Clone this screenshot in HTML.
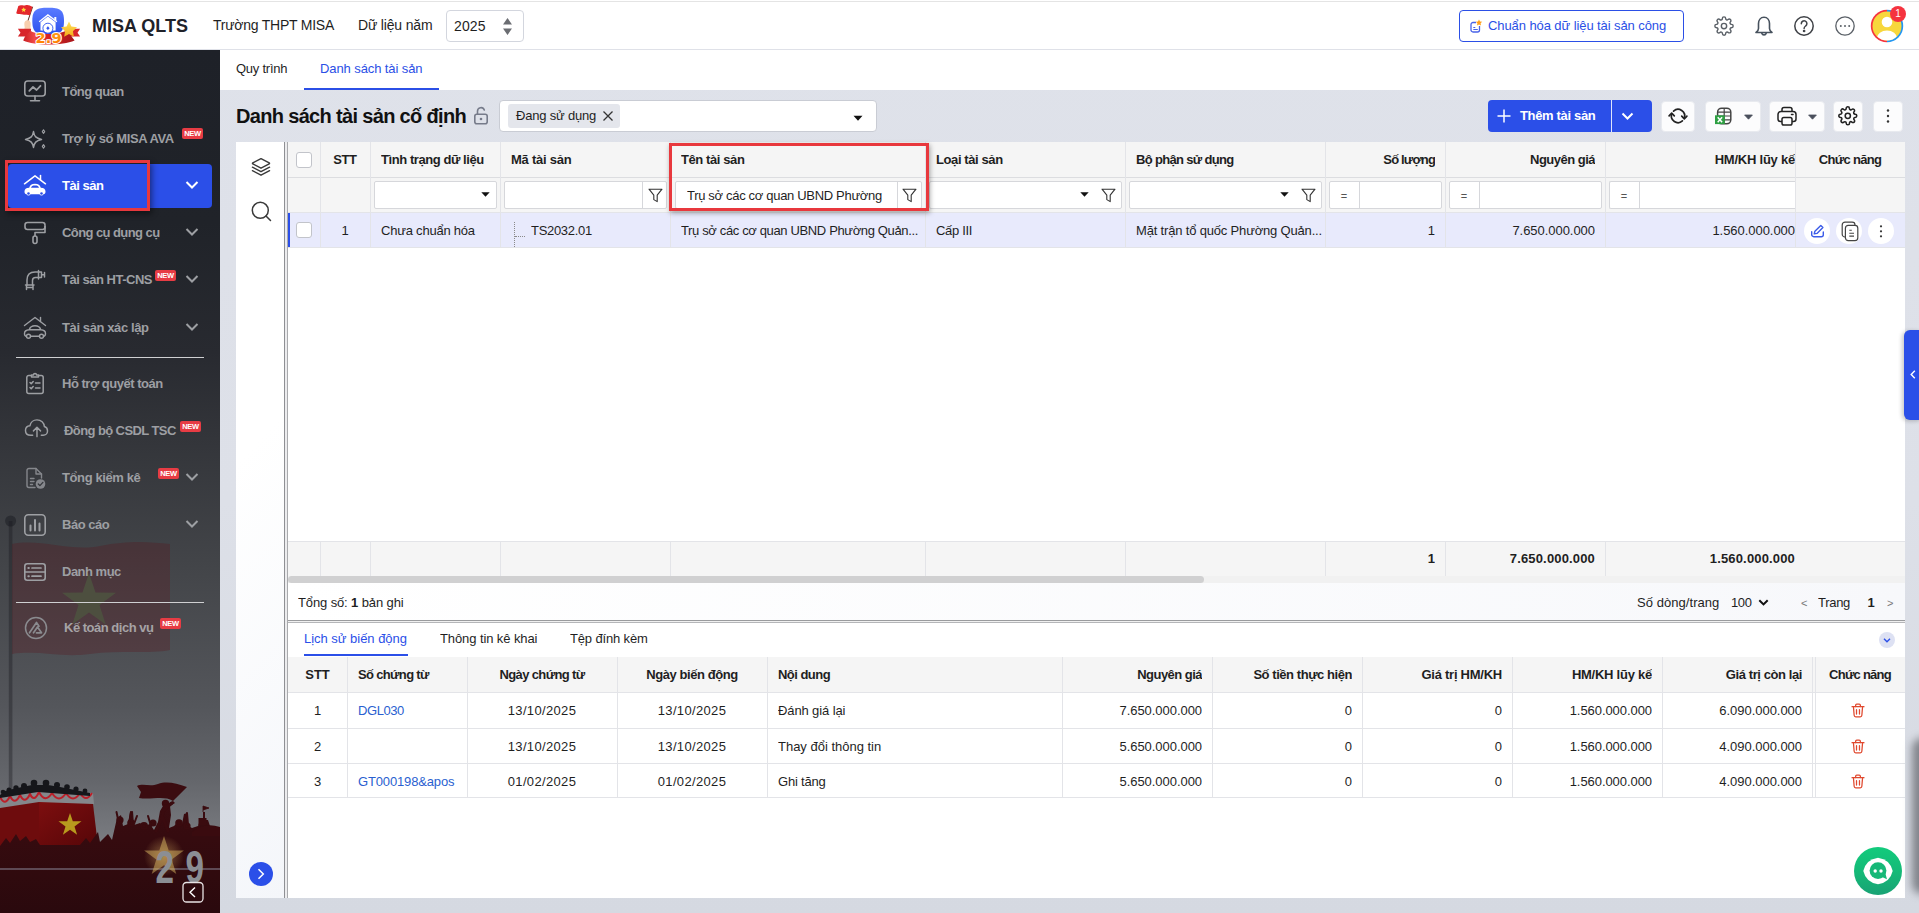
<!DOCTYPE html>
<html lang="vi">
<head>
<meta charset="utf-8">
<title>MISA QLTS - Danh sách tài sản</title>
<style>
*{box-sizing:border-box;margin:0;padding:0}
html,body{width:1919px;height:913px;overflow:hidden}
body{font-family:"Liberation Sans",sans-serif;font-size:13px;color:#1f1f1f;background:linear-gradient(180deg,#dfe2ea 0%,#dde0e8 55%,#d5d9e1 100%);position:relative}
.abs{position:absolute}
svg{display:block;overflow:visible}
/* ---------- header ---------- */
#hdr{position:absolute;left:0;top:0;width:1919px;height:50px;background:#fff;border-top:2px solid transparent;background-image:linear-gradient(#e4e4e4,#e4e4e4);background-size:100% 1px;background-position:0 1px;background-repeat:no-repeat;background-origin:border-box;border-bottom:1px solid #dfe1e8}
#hdr .t{position:absolute;white-space:nowrap}
/* ---------- sidebar ---------- */
#side{position:absolute;left:0;top:50px;width:220px;height:863px;overflow:hidden;
background:linear-gradient(180deg,#1e2128 0%,#202329 20%,#282a30 35%,#33353a 45%,#434549 60%,#54565b 76%,#64666b 84.600%,#797b80 91.500%,#797b80 100%)}
.mi{position:absolute;left:0;width:220px;height:46px;color:#9d9fa3;font-weight:bold;font-size:13px;white-space:nowrap}
.mi .lb{position:absolute;left:62px;top:50%;transform:translateY(-50%)}
.mi .ic{position:absolute;left:23.200px;top:calc(50% + 0.6px);transform:translateY(-50%)}
.mi .ch{position:absolute;left:184.600px;top:50%;transform:translateY(-50%)}
.new{position:absolute;background:#e73c44;color:#fff;font-size:7.5px;font-weight:bold;border-radius:2px;height:11px;line-height:11px;padding:0 2.2px;letter-spacing:-0.25px}
.sep{position:absolute;left:16px;width:188px;height:1px;background:#cfd0d2}
/* ---------- main ---------- */
#tabs{position:absolute;left:220px;top:50px;width:1699px;height:40px;background:#fff}
#tabs .t{position:absolute;top:0;line-height:38px;font-size:13px;white-space:nowrap}
.btn{position:absolute;background:#fcfcfd;border:1px solid #e8eaef;border-radius:4px;height:31px;top:100.500px}
/* ---------- grid ---------- */
.cell{position:absolute;white-space:nowrap;overflow:hidden;font-size:13px}
.hc{font-weight:bold;color:#1f1f1f}
.vl{position:absolute;width:1px;background:#e3e4e8}
.hl{position:absolute;height:1px;background:#e3e4e8}
.fbox{position:absolute;top:181px;height:28px;background:#fff;border:1px solid #d6d7db;border-radius:2px}
.cb{position:absolute;width:16px;height:16px;border:1px solid #c2c4ca;border-radius:3px;background:#fff}
/*FIT_START*/
#x_brand{letter-spacing:0.000px}
#x_org{letter-spacing:-0.242px}
#x_year_l{letter-spacing:-0.172px}
#x_year{letter-spacing:0.136px}
#x_norm{letter-spacing:-0.087px}
#t_qt{letter-spacing:-0.247px}
#t_ds{letter-spacing:-0.093px}
#ttl{letter-spacing:-0.669px}
#chip{letter-spacing:-0.203px}
#addt{letter-spacing:-0.339px}
#m0{letter-spacing:-0.515px}
#m1{letter-spacing:-0.403px}
#m2{letter-spacing:-0.457px}
#m3{letter-spacing:-0.577px}
#m4{letter-spacing:-0.485px}
#m5{letter-spacing:-0.393px}
#m6{letter-spacing:-0.478px}
#m7{letter-spacing:-0.587px}
#m8{letter-spacing:-0.398px}
#m9{letter-spacing:-0.483px}
#m10{letter-spacing:-0.505px}
#m11{letter-spacing:-0.493px}
#h_stt{letter-spacing:-0.421px}
#h_tt{letter-spacing:-0.430px}
#h_ma{letter-spacing:-0.246px}
#h_ten{letter-spacing:-0.402px}
#h_loai{letter-spacing:-0.403px}
#h_bp{letter-spacing:-0.675px}
#h_sl{letter-spacing:-0.834px}
#h_ng{letter-spacing:-0.508px}
#h_hm{letter-spacing:-0.232px}
#h_cn{letter-spacing:-0.682px}
#f_ten{letter-spacing:-0.317px}
#d_tt{letter-spacing:-0.214px}
#d_ma{letter-spacing:-0.301px}
#d_ten{letter-spacing:-0.357px}
#d_loai{letter-spacing:-0.328px}
#d_bp{letter-spacing:-0.174px}
#d_ng{letter-spacing:-0.042px}
#d_hm{letter-spacing:-0.042px}
#s_ng{letter-spacing:0.158px}
#s_hm{letter-spacing:0.158px}
#ft_total{letter-spacing:-0.122px}
#ft_rows{letter-spacing:0.055px}
#ft_100{letter-spacing:-0.368px}
#ft_trang{letter-spacing:-0.297px}
#dt1{letter-spacing:-0.023px}
#dt2{letter-spacing:-0.095px}
#dt3{letter-spacing:-0.150px}
#dh_so{letter-spacing:-0.659px}
#dh_nct{letter-spacing:-0.633px}
#dh_nbd{letter-spacing:-0.421px}
#dh_nd{letter-spacing:-0.529px}
#dh_ng{letter-spacing:-0.528px}
#dh_st{letter-spacing:-0.447px}
#dh_gt{letter-spacing:-0.246px}
#dh_hm{letter-spacing:-0.248px}
#dh_cl{letter-spacing:-0.411px}
#dh_cn{letter-spacing:-0.760px}
#r0_so{letter-spacing:-0.437px}
#r2_so{letter-spacing:-0.146px}
#r0_d1{letter-spacing:0.342px}
#r0_d2{letter-spacing:0.342px}
#r1_d1{letter-spacing:0.342px}
#r1_d2{letter-spacing:0.342px}
#r2_d1{letter-spacing:0.342px}
#r2_d2{letter-spacing:0.342px}
#r0_nd{letter-spacing:-0.113px}
#r1_nd{letter-spacing:-0.009px}
#r2_nd{letter-spacing:-0.207px}
#r0_ng{letter-spacing:-0.049px}
#r1_ng{letter-spacing:-0.049px}
#r2_ng{letter-spacing:-0.049px}
#r0_hm{letter-spacing:-0.065px}
#r1_hm{letter-spacing:-0.065px}
#r2_hm{letter-spacing:-0.065px}
#r0_cl{letter-spacing:-0.034px}
#r1_cl{letter-spacing:-0.034px}
#r2_cl{letter-spacing:-0.034px}
/*FIT_END*/
</style>
</head>
<body>
<!-- MAIN BACKGROUND / TABS -->
<div id="tabs">
  <div class="t" id="t_qt" style="left:16px;color:#1f1f1f">Quy trình</div>
  <div class="t" id="t_ds" style="left:100px;color:#2b4fe6">Danh sách tài sản</div>
  <div class="abs" style="left:84px;top:38px;width:135px;height:2px;background:#2b4fe6"></div>
</div>
<div id="side">
  <!-- background scene -->
  <svg class="abs" style="left:0;top:0" width="220" height="863" viewBox="0 50 220 863">
    <defs>
      <linearGradient id="gGround" x1="0" y1="0" x2="0" y2="1"><stop offset="0" stop-color="#3b0c10"/><stop offset="1" stop-color="#2a090d"/></linearGradient>
      <linearGradient id="gPole" x1="0" y1="0" x2="0" y2="1"><stop offset="0" stop-color="#2a2c31"/><stop offset=".3" stop-color="#35373c"/><stop offset=".45" stop-color="#5c5e62"/><stop offset=".6" stop-color="#6e7074"/><stop offset="1" stop-color="#787a7e"/></linearGradient><linearGradient id="gBox" x1="0" y1="0" x2="1" y2="1"><stop offset="0" stop-color="#7d0e0f"/><stop offset="1" stop-color="#560608"/></linearGradient><radialGradient id="gGlow"><stop offset="0" stop-color="#c9a05a" stop-opacity=".55"/><stop offset="1" stop-color="#c9a05a" stop-opacity="0"/></radialGradient>
    </defs>
    <!-- flag pole + flag (faint) -->
    <circle cx="10.600" cy="521" r="5.500" fill="#2b2d32"/>
    <rect x="8.800" y="521" width="3.600" height="280" fill="#15171b" opacity=".36"/>
    <path d="M12 544 C40 538 70 552 100 546 C130 540 150 542 170 544 V650 C150 654 120 650 90 654 C60 658 40 650 12 654Z" fill="#5e1016" opacity=".27"/>
    <path d="M89 573l6.500 19.500 20.500.2-16.500 12.300 6.200 19.600-16.700-12-16.700 12 6.200-19.600-16.500-12.300 20.500-.2z" fill="#4e5340" opacity=".85"/>
    <!-- podium -->
    <path d="M0 795 L38 790 L93 793 L94 804 L38 806 L0 812Z" fill="#85878b"/>
    <path d="M0 808 L39 802 V846 H0Z" fill="#6e0c0d"/>
    <path d="M39 802 L93 804 L98 846 H39Z" fill="url(#gBox)"/>
    <path d="M70 813l2.800 8.200 8.700.1-7 5.200 2.600 8.300-7.100-5-7.100 5 2.600-8.300-7-5.200 8.700-.1z" fill="#b89a1e"/>
    <path d="M0 797 q5 10 10 -1 q5 10 10 -1 q5 10 10 -1 q4 9 9 -2 q6 12 13 1 q7 11 14 0 q7 11 14 0 q6 10 12 0" stroke="#bb1f29" stroke-width="2" fill="none"/>
    <!-- soldiers -->
    <g fill="#15161a">
      <circle cx="3" cy="792" r="2.300"/><circle cx="9" cy="790" r="2.500"/><circle cx="16" cy="788" r="2.700"/><circle cx="24" cy="786" r="3"/><circle cx="34" cy="783" r="3.300"/><circle cx="46" cy="783" r="3.300"/><circle cx="57" cy="785" r="3"/><circle cx="67" cy="787" r="2.800"/><circle cx="76" cy="789" r="2.600"/><circle cx="85" cy="791" r="2.400"/>
      <path d="M0 795 L5 791 L13 789 L22 787 L32 785 L48 785 L60 787 L70 789 L80 791 L90 793 L90 796 L38 792 L0 798Z"/>
    </g>
    <!-- crowd silhouette & ground -->
    <path d="M0 846 L6 838 L10 843 L16 834 L20 841 L26 836 L30 842 L36 839 L40 845 L80 845 L86 838 L90 843 L98 832 L100 842 L108 834 L112 840 L117 818 L121 815 L123 826 L128 824 L130 812 L133 811 L134 825 L140 823 L144 826 L150 824 L154 830 L158 822 L160 811 L163 806 L162 803 L166 800 L169 803 L173 801 L175 803 L170 806 L171 815 L169 828 L174 826 L178 822 L182 824 L184 814 L187 813 L187 825 L192 828 L198 826 L200 820 L203 820 L203 812 L205 812 L205 820 L208 820 L210 826 L220 828 V913 H0Z" fill="url(#gGround)"/>
    <path d="M137 786 C143 783 150 787 158 784 C166 781 176 783 187 787 L176 798 L173 801 C164 795 152 800 139 798 L141 792Z" fill="#3b0c10"/>
    <path d="M203 812 V806 L209 808 L203 810" fill="#3b0c10" stroke="#3b0c10" stroke-width=".8"/>
    <g fill="#3a0b0f" stroke="#3a0b0f" stroke-width="2" stroke-linecap="round"><circle cx="120" cy="820" r="2.600"/><path d="M119 824 L116.500 812"/><circle cx="131" cy="823" r="2.800"/><path d="M129 824 L131 812 M134 824 L137 816"/><circle cx="144" cy="826" r="3"/><circle cx="153" cy="823" r="2.600"/><path d="M151 826 L148 816"/><circle cx="165.500" cy="803.500" r="2.700"/><path d="M165 806 L161 820 L156 831 M163 818 L168 831 M166 808 L172 803" stroke-width="3"/><circle cx="179" cy="823" r="2.800"/><circle cx="187" cy="826" r="2.600"/><path d="M188 825 L187 813"/><path d="M192 832 Q204 822 220 827 V836 H192Z" stroke="none"/><rect x="198.500" y="818" width="8" height="7" stroke="none"/></g>
    <rect x="0" y="868.500" width="220" height="1" fill="#9b9fb2" opacity=".85"/>
    <!-- 2 9 -->
    <circle cx="164" cy="856" r="20" fill="url(#gGlow)"/>
    <path d="M164 836l4.700 14.400 15.200.1-12.200 9.100 4.600 14.500-12.300-8.900-12.300 8.900 4.600-14.500-12.200-9.100 15.200-.1z" fill="#d8b561" opacity=".5"/>
    <text x="155.500" y="883.300" font-family="Liberation Sans, sans-serif" font-weight="bold" font-size="46" fill="#8b8e94" textLength="18.500" lengthAdjust="spacingAndGlyphs">2</text>
    <text x="185.500" y="883.300" font-family="Liberation Sans, sans-serif" font-weight="bold" font-size="46" fill="#8b8e94" textLength="18.500" lengthAdjust="spacingAndGlyphs">9</text>
    <rect x="183" y="882.500" width="20" height="19.500" rx="3.500" fill="#2d0a0e" stroke="#e8e3e4" stroke-width="1.300"/>
    <path d="M195 887.500 L190 892.300 L195 897" stroke="#fff" stroke-width="1.400" fill="none"/>
  </svg>

  <!-- menu items (top is relative to sidebar: y-50) -->
  <div class="mi" style="top:18px"><svg class="ic" style="top:calc(50% - 0.4px)" width="24" height="24" viewBox="0 0 24 24" fill="none" stroke="#9d9fa3" stroke-width="1.600" stroke-linecap="round" stroke-linejoin="round"><rect x="1.800" y="2" width="20.400" height="15" rx="3"/><path d="M12 17v4.500M7.500 21.700h9"/><path d="M6.300 11.800 L10 8 L13.600 11 L17.500 6.800" stroke-width="1.800"/></svg><span class="lb" id="m0">Tổng quan</span></div>
  <div class="mi" style="top:65px"><svg class="ic" width="24" height="24" viewBox="0 0 24 24" fill="none" stroke="#9d9fa3" stroke-width="1.500" stroke-linejoin="round"><path d="M10.500 4.500 C11.300 9.500 13 11.200 18.500 12.500 C13 13.800 11.300 15.500 10.500 20.500 C9.700 15.500 8 13.800 2.500 12.500 C8 11.200 9.700 9.500 10.500 4.500Z"/><path d="M20.500 2.800 l1.200 1.800 -1.200 1.800 -1.200 -1.800z M20.500 17.600 l1.200 1.800 -1.200 1.800 -1.200 -1.800z" stroke-width="1.100"/></svg><span class="lb" id="m1">Trợ lý số MISA AVA</span><span class="new" style="left:182px;top:13px">NEW</span></div>
  <div class="abs" style="left:8px;top:114px;width:204px;height:44px;border-radius:4px;background:#2b4fe8"></div>
  <div class="mi" style="top:112px;color:#fff"><svg class="ic" width="24" height="24" viewBox="0 0 24 24" fill="#fff" stroke="none"><path d="M1.500 9.800 L12 1.800 L22.500 9.800" fill="none" stroke="#fff" stroke-width="1.500" stroke-linejoin="round" stroke-linecap="round"/><path d="M17.500 5.800 V1.500" stroke="#fff" stroke-width="1.500" stroke-linecap="round"/><path d="M6.200 13.800 C7 11 8.500 9.800 12 9.800 C15.500 9.800 17 11 17.800 13.800 C21 14 22.500 15.200 22.500 17.500 C22.500 19.300 21.800 20 20.500 20.200 A2.200 2.200 0 0 1 16.500 20.300 H7.500 A2.200 2.200 0 0 1 3.500 20.200 C2.200 20 1.500 19.300 1.500 17.500 C1.500 15.200 3 14 6.200 13.800Z"/><path d="M8 13.700 C8.500 12 9.500 11.400 12 11.400 C14.500 11.400 15.500 12 16 13.700Z" fill="#2b4fe8"/><circle cx="5.500" cy="19.500" r="1.300" fill="#2b4fe8"/><circle cx="18.500" cy="19.500" r="1.300" fill="#2b4fe8"/></svg><span class="lb" id="m2">Tài sản</span><svg class="ch" width="14" height="9" viewBox="0 0 14 9"><path d="M1.500 1.500 L7 7 L12.500 1.500" stroke="#fff" stroke-width="2" fill="none"/></svg></div>
  <div class="abs" style="left:5px;top:110px;width:145px;height:51px;border:3px solid #e8383d;box-shadow:2px 3px 6px rgba(0,0,0,.45)"></div>
  <div class="mi" style="top:159px"><svg class="ic" width="24" height="24" viewBox="0 0 24 24" fill="none" stroke="#9d9fa3" stroke-width="1.600" stroke-linejoin="round"><rect x="2" y="1.500" width="20" height="7" rx="2.500"/><path d="M22 5 V11.500 H12 V15"/><rect x="10" y="15" width="4" height="7.500" rx="2"/></svg><span class="lb" id="m3">Công cụ dụng cụ</span><svg class="ch" width="14" height="9" viewBox="0 0 14 9"><path d="M1.500 1.500 L7 7 L12.500 1.500" stroke="#9d9fa3" stroke-width="2" fill="none"/></svg></div>
  <div class="mi" style="top:206px"><svg class="ic" width="24" height="24" viewBox="0 0 24 24" fill="none" stroke="#9d9fa3" stroke-width="1.500" stroke-linejoin="round" stroke-linecap="round"><path d="M4 17 V12 C4 7 7 4 12 4 H15.500 M9.500 17 V12.500 C9.500 10.500 10.500 9.500 12.500 9.500 H15.500"/><path d="M15.500 2.500 V11 M18.500 4 V9.500 H15.500 M18.500 4 H15.500 M18.500 6.700 H21.500 M21.500 4.500 V9"/><path d="M2.500 17 H11 M3.500 17 V21.500 M10 17 V21.500 M3.500 19.500 H10"/></svg><span class="lb" id="m4">Tài sản HT-CNS</span><span class="new" style="left:155px;top:14px">NEW</span><svg class="ch" width="14" height="9" viewBox="0 0 14 9"><path d="M1.500 1.500 L7 7 L12.500 1.500" stroke="#9d9fa3" stroke-width="2" fill="none"/></svg></div>
  <div class="mi" style="top:254px"><svg class="ic" width="24" height="24" viewBox="0 0 24 24" fill="none" stroke="#9d9fa3" stroke-width="1.400" stroke-linejoin="round" stroke-linecap="round"><path d="M1.500 9.500 L12 1.500 L22.500 9.500"/><path d="M17.500 5.500 V1.500"/><path d="M6.200 13.800 C7 11 8.500 9.800 12 9.800 C15.500 9.800 17 11 17.800 13.800 C21 14 22.500 15.200 22.500 17.500 C22.500 19.300 21.800 20.200 20.500 20.200 M16.500 20.200 H7.500 M3.500 20.200 C2.200 20.200 1.500 19.300 1.500 17.500 C1.500 15.200 3 14 6.200 13.800 H17.800"/><circle cx="5.500" cy="20.200" r="2"/><circle cx="18.500" cy="20.200" r="2"/></svg><span class="lb" id="m5">Tài sản xác lập</span><svg class="ch" width="14" height="9" viewBox="0 0 14 9"><path d="M1.500 1.500 L7 7 L12.500 1.500" stroke="#9d9fa3" stroke-width="2" fill="none"/></svg></div>
  <div class="sep" style="top:306.500px"></div>
  <div class="mi" style="top:310px"><svg class="ic" width="24" height="24" viewBox="0 0 24 24" fill="none" stroke="#9d9fa3" stroke-width="1.500" stroke-linejoin="round" stroke-linecap="round"><path d="M8 3.500 H5.800 a2 2 0 0 0 -2 2 V19.500 a2 2 0 0 0 2 2 H18.200 a2 2 0 0 0 2 -2 V5.500 a2 2 0 0 0 -2 -2 H16"/><path d="M8.500 5 V3 H10.500 a1.500 1.500 0 0 1 3 0 H15.500 V5Z"/><path d="M7 10.500 l1.200 1.200 2 -2.200 M7 15.500 l1.200 1.200 2 -2.200 M12.500 11 H17 M12.500 16 H17"/></svg><span class="lb" id="m6">Hỗ trợ quyết toán</span></div>
  <div class="mi" style="top:357px"><svg class="ic" style="left:23.500px;top:calc(50% - 2.200px)" width="25" height="23" viewBox="0 0 26 24" fill="none" stroke="#9d9fa3" stroke-width="1.500" stroke-linejoin="round" stroke-linecap="round"><path d="M9 19.500 H7 C3.500 19.500 1.500 17.300 1.500 14.500 C1.500 11.800 3.500 9.800 6.200 9.600 C6.800 6 9.800 3.500 13.500 3.500 C17.800 3.500 21 6.500 21.200 10.500 C23.500 11.200 24.500 13 24.500 15 C24.500 17.500 22.500 19.500 20 19.500 H18"/><path d="M13.500 21 V11.500 M9.800 15 L13.500 11.300 L17.200 15"/></svg><span class="lb" id="m7" style="left:64px">Đồng bộ CSDL TSC</span><span class="new" style="left:180px;top:13.500px">NEW</span></div>
  <div class="mi" style="top:404px"><svg class="ic" width="24" height="24" viewBox="0 0 24 24" fill="none" stroke="#85878c" stroke-width="1.400" stroke-linejoin="round" stroke-linecap="round"><path d="M12 21.500 H6 a2 2 0 0 1 -2 -2 V4.500 a2 2 0 0 1 2 -2 H13 L18.500 8 V12"/><path d="M13 2.500 V8 H18.500"/><path d="M7.500 12.500 H11 M7.500 15.500 H11 M7.500 18.500 H9.500"/><circle cx="17.500" cy="18" r="4.800" fill="#85878c" stroke="none"/><path d="M15.300 18 l1.600 1.600 3 -3.200" stroke="#35373c" stroke-width="1.300"/></svg><span class="lb" id="m8">Tổng kiểm kê</span><span class="new" style="left:158px;top:14px">NEW</span><svg class="ch" width="14" height="9" viewBox="0 0 14 9"><path d="M1.500 1.500 L7 7 L12.500 1.500" stroke="#9d9fa3" stroke-width="2" fill="none"/></svg></div>
  <div class="mi" style="top:451px"><svg class="ic" width="24" height="24" viewBox="0 0 24 24" fill="none" stroke="#9d9fa3" stroke-width="1.600" stroke-linejoin="round" stroke-linecap="round"><rect x="1.800" y="1.800" width="20.400" height="20.400" rx="3.500"/><path d="M7.500 17.500 V12.500 M12 17.500 V7 M16.500 17.500 V10.500" stroke-width="2"/></svg><span class="lb" id="m9">Báo cáo</span><svg class="ch" width="14" height="9" viewBox="0 0 14 9"><path d="M1.500 1.500 L7 7 L12.500 1.500" stroke="#9d9fa3" stroke-width="2" fill="none"/></svg></div>
  <div class="mi" style="top:498px"><svg class="ic" width="24" height="24" viewBox="0 0 24 24" fill="none" stroke="#9d9fa3" stroke-width="1.600" stroke-linejoin="round" stroke-linecap="round"><rect x="1.800" y="3.800" width="20.400" height="16.400" rx="2.500"/><path d="M1.800 12 H22.200"/><path d="M9 8 H18 M9 16.200 H18" stroke-width="1.700"/><path d="M5.300 8 H5.900 M5.300 16.200 H5.900" stroke-width="1.900"/></svg><span class="lb" id="m10">Danh mục</span></div>
  <div class="sep" style="top:552px"></div>
  <div class="mi" style="top:554px"><svg class="ic" style="left:24px" width="24" height="24" viewBox="0 0 24 24" fill="none" stroke="#8a8b8f" stroke-width="1.500" stroke-linejoin="round" stroke-linecap="round"><circle cx="12" cy="12" r="10.500"/><path d="M5.500 16.800 L12.500 6.500 L15 10.200 M9.500 16.800 L13.500 11 L17.500 16.800 H12.500" stroke-width="1.700"/></svg><span class="lb" id="m11" style="left:64px;color:#a6a3a5">Kế toán dịch vụ</span><span class="new" style="left:160px;top:14px">NEW</span></div>
</div>

<div id="hdr">
  <!-- logo -->
  <svg class="abs" style="left:0;top:-2px" width="96" height="50" viewBox="0 0 96 50">
    <defs>
      <linearGradient id="lgB" x1="0" y1="0" x2="0" y2="1"><stop offset="0" stop-color="#5a7bff"/><stop offset="1" stop-color="#2c50ee"/></linearGradient>
      <linearGradient id="lgR" x1="0" y1="0" x2="1" y2="0"><stop offset="0" stop-color="#c81d22"/><stop offset=".22" stop-color="#f04a48"/><stop offset=".45" stop-color="#d92428"/><stop offset="1" stop-color="#a8161a"/></linearGradient>
      <linearGradient id="lgS" x1="0" y1="0" x2="0" y2="1"><stop offset="0" stop-color="#ffe45c"/><stop offset="1" stop-color="#f5a91a"/></linearGradient>
      <linearGradient id="lgO" x1="0" y1="0" x2="0" y2="1"><stop offset="0" stop-color="#ffa21a"/><stop offset="1" stop-color="#ff7a00"/></linearGradient>
    </defs>
    <path d="M32.600 6.800 L25.300 28.700" stroke="#5a2f26" stroke-width="1" fill="none"/>
    <path d="M18.300 6 C21 4.500 23 6.200 25.500 5.200 C28 4.300 30 5.600 32.500 6.800 L29.800 15.300 C27 14 25 15.200 23 14.600 C20.500 13.800 18.500 15 16.200 13.200 Z" fill="#e3282c"/>
    <path d="M23.600 7.300l.8 1.500 1.700.2-1.200 1.200.3 1.700-1.500-.8-1.500.8.300-1.700-1.200-1.200 1.700-.2z" fill="#ffd83a"/>
    <path d="M24.300 24 C24.300 21.500 25.500 20.300 27.500 20.300 C29.600 20.300 30.700 21.800 30.700 24 L30.400 29 L24.800 29 Z" fill="#f8cfae"/>
    <path d="M48.100 7.800 C60 7.800 64 9.800 64 21 C64 32.300 60 34.400 48.100 34.400 C36.300 34.400 32.300 32.300 32.300 21 C32.300 9.800 36.300 7.800 48.100 7.800Z" fill="url(#lgB)"/>
    <path d="M39.200 21.800 L47.900 14.900 L56.900 21.800" stroke="#fff" stroke-width="1.300" fill="none" stroke-linejoin="miter"/>
    <path d="M54.300 19.500 V17 H56.300 V21" fill="#fff"/>
    <path d="M40.500 22.300 L47.900 16.600 L55.600 22.300 V30.500 H40.500Z" fill="#fff"/>
    <circle cx="47.900" cy="28.200" r="5" fill="#fff" stroke="#3d62f3" stroke-width="1"/>
    <path d="M47.900 26.300 L49.600 28.200 L47.900 30.100 L46.200 28.200Z" fill="#3358f0"/>
    <path d="M17.900 28.800 H31 V36.600 H17.900 L20.500 32.700Z" fill="#d8262b"/>
    <path d="M80.100 28.800 H67 V36.600 H80.100 L77.500 32.700Z" fill="#d8262b"/>
    <path d="M25 36.600 L30.800 30.300 L31.500 31.500 C38 35 58 35 67 30.500 L74.600 40.500 C62 45.800 35 45.800 23.200 40.500 Z" fill="url(#lgR)"/>
    <path d="M69 21.400l2.400 5.200 5.600.7-4.100 3.900 1 5.600-4.900-2.700-4.900 2.700 1-5.600-4.100-3.900 5.600-.7z" fill="url(#lgS)"/>
    <text x="35.600" y="42.500" font-family="DejaVu Sans, Liberation Sans, sans-serif" font-weight="bold" font-size="13.500" fill="url(#lgO)" stroke="#fff" stroke-width="2" paint-order="stroke" stroke-linejoin="round" textLength="26" lengthAdjust="spacingAndGlyphs">2.9</text>
  </svg>
  <div class="t" style="left:92px;top:13px;font-size:18px;font-weight:bold;color:#1f2229;line-height:22px" id="x_brand">MISA QLTS</div>
  <div class="t" style="left:213px;top:14px;font-size:14px;line-height:18px;color:#1f1f1f" id="x_org">Trường THPT MISA</div>
  <div class="t" style="left:358px;top:14px;font-size:14px;line-height:18px;color:#1f1f1f" id="x_year_l">Dữ liệu năm</div>
  <div class="abs" style="left:446px;top:8px;width:78px;height:32px;border:1px solid #d3d6de;border-radius:4px;background:#fff"></div>
  <div class="t" style="left:454px;top:15px;font-size:14px;line-height:18px;color:#1f1f1f" id="x_year">2025</div>
  <svg class="abs" style="left:502px;top:15px" width="11" height="19" viewBox="0 0 11 19"><path d="M5.5 1 L10 7.500 H1Z M5.500 18 L10 11.500 H1Z" fill="#6b6d72"/></svg>
  <!-- right button -->
  <div class="abs" style="left:1459px;top:8px;width:225px;height:32px;border:1.5px solid #2b4fe6;border-radius:4px;background:#fff"></div>
  <svg class="abs" style="left:1469px;top:17px" width="14" height="15" viewBox="0 0 14 15"><path d="M3.5 3.500 H7 M10.500 7 V11 a2 2 0 0 1 -2 2 H4 a2 2 0 0 1 -2 -2 V5.500 a2 2 0 0 1 2 -2" stroke="#4a63e8" stroke-width="1.300" fill="none"/><path d="M4.300 10.500h4.500M4.300 8.500h2" stroke="#4a63e8" stroke-width="1.100"/><path d="M10 .5l1 2 2.200.3-1.600 1.500.4 2.200-2-1.100-2 1.100.4-2.200-1.600-1.500 2.200-.3z" fill="#ff9f1a"/></svg>
  <div class="t" style="left:1488px;top:15px;font-size:13px;line-height:18px;color:#2b4fe6" id="x_norm">Chuẩn hóa dữ liệu tài sản công</div>
  <!-- gear -->
  <svg class="abs" style="left:1714.200px;top:14.200px" width="20" height="20" viewBox="0 0 24 24" fill="none" stroke="#5a6067" stroke-width="1.700" stroke-linejoin="round"><circle cx="12" cy="12" r="3.200"/><path d="M19.400 15a1.650 1.650 0 0 0 .33 1.820l.060.060a2 2 0 1 1-2.830 2.830l-.060-.060a1.650 1.650 0 0 0-1.820-.33 1.650 1.650 0 0 0-1 1.510V21a2 2 0 1 1-4 0v-.090A1.650 1.650 0 0 0 9 19.400a1.650 1.650 0 0 0-1.820.33l-.060.060a2 2 0 1 1-2.830-2.830l.060-.060a1.650 1.650 0 0 0 .33-1.820 1.650 1.650 0 0 0-1.510-1H3a2 2 0 1 1 0-4h.090A1.650 1.650 0 0 0 4.600 9a1.650 1.650 0 0 0-.33-1.820l-.060-.060a2 2 0 1 1 2.830-2.830l.060.060a1.650 1.650 0 0 0 1.820.33H9a1.650 1.650 0 0 0 1-1.510V3a2 2 0 1 1 4 0v.090a1.650 1.650 0 0 0 1 1.510 1.650 1.650 0 0 0 1.820-.33l.060-.060a2 2 0 1 1 2.830 2.830l-.060.060a1.650 1.650 0 0 0-.33 1.820V9a1.650 1.650 0 0 0 1.510 1H21a2 2 0 1 1 0 4h-.090a1.650 1.650 0 0 0-1.510 1z"/></svg>
  <!-- bell -->
  <svg class="abs" style="left:1754px;top:14px" width="20" height="22" viewBox="0 0 20 22" fill="none" stroke="#47525e" stroke-width="1.600" stroke-linecap="round" stroke-linejoin="round"><path d="M10 1.200 C6.500 1.200 4.500 4.200 4.500 7.600 V12.500 C4.500 14 3.500 15.500 2 16.500 H18 C16.500 15.500 15.500 14 15.500 12.500 V7.600 C15.500 4.200 13.500 1.200 10 1.200Z"/><path d="M7.800 17.200 a2.300 2.300 0 0 0 4.400 0"/></svg>
  <!-- help -->
  <svg class="abs" style="left:1793.400px;top:13.200px" width="22" height="22" viewBox="0 0 22 22" fill="none" stroke="#3f4247" stroke-width="1.500"><circle cx="11" cy="11" r="9.200"/><path d="M8.300 8.700 a2.800 2.800 0 1 1 4.300 2.300 c-1 .7-1.500 1.200-1.500 2.400" stroke-linecap="round"/><circle cx="11.100" cy="16" r=".6" fill="#3f4247"/></svg>
  <!-- more -->
  <svg class="abs" style="left:1833.500px;top:13.200px" width="22" height="22" viewBox="0 0 22 22" fill="none" stroke="#5a6067" stroke-width="1.300"><circle cx="11" cy="11" r="9.200"/><g fill="#5a6067" stroke="none"><circle cx="6.800" cy="11" r="1"/><circle cx="11" cy="11" r="1"/><circle cx="15.200" cy="11" r="1"/></g></svg>
  <!-- avatar -->
  <svg class="abs" style="left:1869.700px;top:7px" width="34" height="34" viewBox="0 0 34 34"><defs><clipPath id="avc"><circle cx="17" cy="17" r="14.500"/></clipPath></defs><path d="M17 .8 A16.200 16.200 0 0 0 17 33.200Z" fill="#f5333f"/><path d="M17 .8 A16.200 16.200 0 0 1 17 33.200Z" fill="#2196f3"/><circle cx="17" cy="17" r="14.500" fill="#f7d73c"/><g clip-path="url(#avc)" fill="#fff"><circle cx="17" cy="13" r="5.300"/><ellipse cx="17" cy="29" rx="10" ry="7.500"/></g></svg>
  <div class="abs" style="left:1890px;top:4px;width:16px;height:16px;border-radius:8px;background:#f5333f;color:#fff;font-size:10px;line-height:16px;text-align:center">1</div>
</div>

<!-- title + toolbar -->
<div class="abs" style="left:236px;top:103px;font-size:20px;font-weight:bold;line-height:26px;color:#111;white-space:nowrap" id="ttl">Danh sách tài sản cố định</div>
<svg class="abs" style="left:473px;top:106px" width="16" height="19" viewBox="0 0 16 19" fill="none" stroke="#767b8a" stroke-width="1.600" stroke-linecap="round"><rect x="1.800" y="8.300" width="12.400" height="9.400" rx="2"/><path d="M4.500 8 V5.200 a3.500 3.500 0 0 1 6.800 -1.200"/><circle cx="8" cy="13" r="1.300" fill="#767b8a" stroke="none"/></svg>
<div class="abs" style="left:499px;top:100px;width:378px;height:32px;background:#fff;border:1px solid #c9ccd4;border-radius:4px"></div>
<div class="abs" style="left:508px;top:104px;width:112px;height:24px;background:#e4e6ec;border-radius:3px"></div>
<div class="abs" style="left:516px;top:107px;font-size:13px;line-height:18px;color:#1f1f1f;white-space:nowrap" id="chip">Đang sử dụng</div>
<svg class="abs" style="left:602px;top:110px" width="12" height="12" viewBox="0 0 12 12"><path d="M1.500 1.500 L10.500 10.500 M10.500 1.500 L1.500 10.500" stroke="#333" stroke-width="1.300"/></svg>
<svg class="abs" style="left:853px;top:115px" width="10" height="6" viewBox="0 0 10 6"><path d="M.5 .8 H9.500 L5 5.800Z" fill="#111"/></svg>
<!-- add button -->
<div class="abs" style="left:1488px;top:100px;width:164px;height:32px;border-radius:4px;background:#2b4fe8"></div>
<div class="abs" style="left:1611px;top:100px;width:1px;height:32px;background:#fff;opacity:.85"></div>
<svg class="abs" style="left:1497px;top:109px" width="14" height="14" viewBox="0 0 14 14"><path d="M7 .5 V13.500 M.5 7 H13.500" stroke="#fff" stroke-width="1.500"/></svg>
<div class="abs" style="left:1520px;top:107px;font-size:13px;font-weight:bold;line-height:18px;color:#fff;white-space:nowrap" id="addt">Thêm tài sản</div>
<svg class="abs" style="left:1621px;top:112px" width="13" height="9" viewBox="0 0 13 9"><path d="M1.500 1.500 L6.500 6.500 L11.500 1.500" stroke="#fff" stroke-width="2" fill="none"/></svg>
<!-- refresh -->
<div class="btn" style="left:1660.800px;width:34.600px"></div>
<svg class="abs" style="left:1668px;top:106px" width="20" height="20" viewBox="0 0 20 20" fill="none" stroke="#222" stroke-width="1.700" stroke-linecap="round" stroke-linejoin="round"><path d="M5.580 5.100 A6.600 6.600 0 0 1 16.200 12.260"/><path d="M13.700 10.200 L16.300 12.800 L18.900 10.200"/><path d="M14.420 14.900 A6.600 6.600 0 0 1 3.800 7.740"/><path d="M1.100 9.800 L3.700 7.200 L6.300 9.800"/></svg>
<!-- excel -->
<div class="btn" style="left:1704.600px;width:56.800px"></div>
<svg class="abs" style="left:1714px;top:106px" width="20" height="20" viewBox="0 0 20 20"><rect x="3.600" y="2.200" width="13.200" height="15.600" rx="4" fill="none" stroke="#444" stroke-width="1.500"/><path d="M3.600 6.200 H16.800 M3.600 10 H16.800 M3.600 13.800 H16.800 M10.200 2.200 V17.800" stroke="#444" stroke-width="1.200"/><rect x="1" y="9.300" width="9.800" height="8.800" fill="#2ea043"/><path d="M3.700 11.300 L8.100 16.300 M8.100 11.300 L3.700 16.300" stroke="#fff" stroke-width="1.500"/></svg>
<svg class="abs" style="left:1744px;top:114px" width="9" height="6" viewBox="0 0 9 6"><path d="M.6 1 H8.400 L4.500 5.200Z" fill="#4a4f5c" stroke="#4a4f5c" stroke-width=".8" stroke-linejoin="round"/></svg>
<!-- print -->
<div class="btn" style="left:1768.700px;width:56.500px"></div>
<svg class="abs" style="left:1776px;top:105px" width="22" height="22" viewBox="0 0 22 22" fill="none" stroke="#222" stroke-width="1.500" stroke-linejoin="round"><path d="M6 6.500 V4.500 a2 2 0 0 1 2 -2 H14 a2 2 0 0 1 2 2 V6.500"/><path d="M6 16.500 H4.500 a2.500 2.500 0 0 1 -2.500 -2.500 V9.500 a3 3 0 0 1 3 -3 H17 a3 3 0 0 1 3 3 V14 a2.500 2.500 0 0 1 -2.500 2.500 H16"/><rect x="6" y="12.500" width="10" height="7.500" rx="1.800"/><path d="M15.500 9.500 H17" stroke-linecap="round"/></svg>
<svg class="abs" style="left:1808px;top:114px" width="9" height="6" viewBox="0 0 9 6"><path d="M.6 1 H8.400 L4.500 5.200Z" fill="#4a4f5c" stroke="#4a4f5c" stroke-width=".8" stroke-linejoin="round"/></svg>
<!-- gear -->
<div class="btn" style="left:1832.700px;width:30.500px"></div>
<svg class="abs" style="left:1838.200px;top:106.300px" width="19.600" height="19.600" viewBox="0 0 24 24" fill="none" stroke="#222" stroke-width="1.900" stroke-linejoin="round"><circle cx="12" cy="12" r="3.200"/><path d="M19.400 15a1.650 1.650 0 0 0 .33 1.820l.060.060a2 2 0 1 1-2.830 2.830l-.060-.060a1.650 1.650 0 0 0-1.820-.33 1.650 1.650 0 0 0-1 1.510V21a2 2 0 1 1-4 0v-.090A1.650 1.650 0 0 0 9 19.400a1.650 1.650 0 0 0-1.820.33l-.060.060a2 2 0 1 1-2.830-2.830l.060-.060a1.650 1.650 0 0 0 .33-1.820 1.650 1.650 0 0 0-1.510-1H3a2 2 0 1 1 0-4h.090A1.650 1.650 0 0 0 4.600 9a1.650 1.650 0 0 0-.33-1.820l-.060-.060a2 2 0 1 1 2.830-2.830l.060.060a1.650 1.650 0 0 0 1.820.33H9a1.650 1.650 0 0 0 1-1.510V3a2 2 0 1 1 4 0v.090a1.650 1.650 0 0 0 1 1.510 1.650 1.650 0 0 0 1.820-.33l.060-.060a2 2 0 1 1 2.830 2.830l-.060.060a1.650 1.650 0 0 0-.33 1.820V9a1.650 1.650 0 0 0 1.510 1H21a2 2 0 1 1 0 4h-.090a1.650 1.650 0 0 0-1.510 1z"/></svg>
<!-- more -->
<div class="btn" style="left:1872.900px;width:30.300px"></div>
<svg class="abs" style="left:1886px;top:108px" width="4" height="16" viewBox="0 0 4 16" fill="#333"><circle cx="2" cy="2.500" r="1.200"/><circle cx="2" cy="8" r="1.200"/><circle cx="2" cy="13.500" r="1.200"/></svg>

<!--GRID_START-->
<!-- left tool panel -->
<div class="abs" style="left:236px;top:142px;width:48px;height:755.500px;background:linear-gradient(135deg,#fff 0%,#fff 40%,#f4f6fa 100%)"></div>
<div class="abs" style="left:284px;top:142px;width:4px;height:755.500px;background:#ececee;border-left:1px solid #8f9094;border-right:1px solid #a9aaad"></div>
<div class="abs" style="left:288px;top:142px;width:1617px;height:755.500px;background:#fff"></div>
<svg class="abs" style="left:251px;top:157px" width="20" height="20" viewBox="0 0 20 20" fill="none" stroke="#3a3a3a" stroke-width="1.400" stroke-linejoin="round" stroke-linecap="round"><path d="M10 1.600 L18.200 5.900 Q18.900 6.400 18.200 6.900 L10 11.200 L1.800 6.900 Q1.100 6.400 1.800 5.900Z"/><path d="M1.400 10.200 L10 14.700 L18.600 10.200 M1.400 13.700 L10 18.200 L18.600 13.700"/></svg>
<svg class="abs" style="left:251px;top:200.500px" width="21" height="21" viewBox="0 0 21 21" fill="none" stroke="#3a3a3a" stroke-width="1.500" stroke-linecap="round"><circle cx="9.300" cy="9.300" r="8"/><path d="M15 15 L19.500 19.500"/></svg>
<div class="abs" style="left:249px;top:862px;width:24px;height:24px;border-radius:12px;background:#2b4fe8"></div>
<svg class="abs" style="left:257px;top:868px" width="8" height="12" viewBox="0 0 8 12"><path d="M1.500 1.200 L6.300 6 L1.500 10.800" stroke="#fff" stroke-width="1.500" fill="none"/></svg>
<div class="abs" style="left:288px;top:142px;width:1617px;height:71px;background:#f5f5f5"></div>
<div class="abs" style="left:288px;top:213px;width:1617px;height:34px;background:#e8eafc"></div>
<div class="abs" style="left:288px;top:213px;width:2px;height:34px;background:#2b4fe8"></div>
<div class="abs" style="left:288px;top:541px;width:1617px;height:35px;background:#f5f5f5;border-top:1px solid #e3e4e8"></div>
<div class="hl" style="left:288px;top:177px;width:1617px;background:#dcdde0"></div>
<div class="hl" style="left:288px;top:212px;width:1617px"></div>
<div class="hl" style="left:288px;top:247px;width:1617px"></div>
<div class="vl" style="left:320px;top:142px;height:105px"></div>
<div class="vl" style="left:320px;top:542px;height:34px"></div>
<div class="vl" style="left:370px;top:142px;height:105px"></div>
<div class="vl" style="left:370px;top:542px;height:34px"></div>
<div class="vl" style="left:500px;top:142px;height:105px"></div>
<div class="vl" style="left:500px;top:542px;height:34px"></div>
<div class="vl" style="left:670px;top:142px;height:105px"></div>
<div class="vl" style="left:670px;top:542px;height:34px"></div>
<div class="vl" style="left:925px;top:142px;height:105px"></div>
<div class="vl" style="left:925px;top:542px;height:34px"></div>
<div class="vl" style="left:1125px;top:142px;height:105px"></div>
<div class="vl" style="left:1125px;top:542px;height:34px"></div>
<div class="vl" style="left:1325px;top:142px;height:105px"></div>
<div class="vl" style="left:1325px;top:542px;height:34px"></div>
<div class="vl" style="left:1445px;top:142px;height:105px"></div>
<div class="vl" style="left:1445px;top:542px;height:34px"></div>
<div class="vl" style="left:1605px;top:142px;height:105px"></div>
<div class="vl" style="left:1605px;top:542px;height:34px"></div>
<div class="vl" style="left:1795px;top:142px;height:105px"></div>
<div class="cb" style="left:296px;top:152px"></div>
<div class="cell hc" id="h_stt" style="left:320px;top:151px;width:50px;height:18px;line-height:18px;text-align:center;">STT</div>
<div class="cell hc" id="h_tt" style="left:381px;top:151px;width:118px;height:18px;line-height:18px;text-align:left;">Tình trạng dữ liệu</div>
<div class="cell hc" id="h_ma" style="left:511px;top:151px;width:150px;height:18px;line-height:18px;text-align:left;">Mã tài sản</div>
<div class="cell hc" id="h_ten" style="left:681px;top:151px;width:230px;height:18px;line-height:18px;text-align:left;">Tên tài sản</div>
<div class="cell hc" id="h_loai" style="left:936px;top:151px;width:180px;height:18px;line-height:18px;text-align:left;">Loại tài sản</div>
<div class="cell hc" id="h_bp" style="left:1136px;top:151px;width:180px;height:18px;line-height:18px;text-align:left;">Bộ phận sử dụng</div>
<div class="cell hc" id="h_sl" style="left:1335px;top:151px;width:100px;height:18px;line-height:18px;text-align:right;">Số lượng</div>
<div class="cell hc" id="h_ng" style="left:1455px;top:151px;width:140px;height:18px;line-height:18px;text-align:right;">Nguyên giá</div>
<div class="cell hc" id="h_hm" style="left:1615px;top:151px;width:180px;height:18px;line-height:18px;text-align:right;">HM/KH lũy kế</div>
<div class="cell hc" id="h_cn" style="left:1795px;top:151px;width:110px;height:18px;line-height:18px;text-align:center;">Chức năng</div>
<div class="fbox" style="left:374px;width:123px;"></div>
<svg class="abs" style="left:481px;top:192px" width="9" height="5" viewBox="0 0 9 5"><path d="M.3 .3 H8.700 L4.500 4.800Z" fill="#111"/></svg>
<div class="fbox" style="left:504px;width:163px;"></div>
<div class="vl" style="left:642px;top:182px;height:26px;background:#d6d7db"></div>
<svg class="abs" style="left:648px;top:188px" width="15" height="15" viewBox="0 0 15 15" fill="none" stroke="#333" stroke-width="1.100" stroke-linejoin="round"><path d="M1 1.200 H14 L9.200 7.200 V13.600 L5.800 11.600 V7.200Z"/></svg>
<div class="fbox" style="left:674.5px;width:247.5px;"></div>
<div class="vl" style="left:897px;top:182px;height:26px;background:#d6d7db"></div>
<svg class="abs" style="left:902px;top:188px" width="15" height="15" viewBox="0 0 15 15" fill="none" stroke="#333" stroke-width="1.100" stroke-linejoin="round"><path d="M1 1.200 H14 L9.200 7.200 V13.600 L5.800 11.600 V7.200Z"/></svg>
<div class="cell" id="f_ten" style="left:687px;top:187px;width:205px;height:18px;line-height:18px">Trụ sở các cơ quan UBND Phường</div>
<div class="fbox" style="left:929px;width:192.5px;"></div>
<svg class="abs" style="left:1080px;top:192px" width="9" height="5" viewBox="0 0 9 5"><path d="M.3 .3 H8.700 L4.500 4.800Z" fill="#111"/></svg>
<svg class="abs" style="left:1101px;top:188px" width="15" height="15" viewBox="0 0 15 15" fill="none" stroke="#333" stroke-width="1.100" stroke-linejoin="round"><path d="M1 1.200 H14 L9.200 7.200 V13.600 L5.800 11.600 V7.200Z"/></svg>
<div class="fbox" style="left:1129px;width:192.5px;"></div>
<svg class="abs" style="left:1280px;top:192px" width="9" height="5" viewBox="0 0 9 5"><path d="M.3 .3 H8.700 L4.500 4.800Z" fill="#111"/></svg>
<svg class="abs" style="left:1301px;top:188px" width="15" height="15" viewBox="0 0 15 15" fill="none" stroke="#333" stroke-width="1.100" stroke-linejoin="round"><path d="M1 1.200 H14 L9.200 7.200 V13.600 L5.800 11.600 V7.200Z"/></svg>
<div class="fbox" style="left:1329px;width:112.5px;"></div>
<div class="vl" style="left:1359px;top:182px;height:26px;background:#d6d7db"></div>
<div class="cell" style="left:1329px;top:187px;width:30px;height:18px;line-height:18px;text-align:center;color:#555;font-size:11px">=</div>
<div class="fbox" style="left:1449px;width:152.6px;"></div>
<div class="vl" style="left:1479px;top:182px;height:26px;background:#d6d7db"></div>
<div class="cell" style="left:1449px;top:187px;width:30px;height:18px;line-height:18px;text-align:center;color:#555;font-size:11px">=</div>
<div class="fbox" style="left:1609px;width:190px;border-right:none;border-radius:2px 0 0 2px"></div>
<div class="vl" style="left:1639px;top:182px;height:26px;background:#d6d7db"></div>
<div class="cell" style="left:1609px;top:187px;width:30px;height:18px;line-height:18px;text-align:center;color:#555;font-size:11px">=</div>
<div class="abs" style="left:1795px;top:178px;width:110px;height:34px;background:#f5f5f5"></div>
<div class="vl" style="left:1795px;top:142px;height:105px"></div>
<div class="cb" style="left:296px;top:222px"></div>
<div class="cell " style="left:320px;top:222px;width:50px;height:18px;line-height:18px;text-align:center;">1</div>
<div class="cell " id="d_tt" style="left:381px;top:222px;width:118px;height:18px;line-height:18px;text-align:left;">Chưa chuẩn hóa</div>
<div class="abs" style="left:514px;top:222px;width:0;height:25px;border-left:1px dotted #8a8a8a"></div>
<div class="abs" style="left:515px;top:236px;width:10px;height:0;border-top:1px dotted #8a8a8a"></div>
<div class="cell " id="d_ma" style="left:531px;top:222px;width:130px;height:18px;line-height:18px;text-align:left;">TS2032.01</div>
<div class="cell " id="d_ten" style="left:681px;top:222px;width:240px;height:18px;line-height:18px;text-align:left;">Trụ sở các cơ quan UBND Phường Quản...</div>
<div class="cell " id="d_loai" style="left:936px;top:222px;width:180px;height:18px;line-height:18px;text-align:left;">Cấp III</div>
<div class="cell " id="d_bp" style="left:1136px;top:222px;width:188px;height:18px;line-height:18px;text-align:left;">Mặt trận tổ quốc Phường Quản...</div>
<div class="cell " style="left:1335px;top:222px;width:100px;height:18px;line-height:18px;text-align:right;">1</div>
<div class="cell " id="d_ng" style="left:1455px;top:222px;width:140px;height:18px;line-height:18px;text-align:right;">7.650.000.000</div>
<div class="cell " id="d_hm" style="left:1615px;top:222px;width:180px;height:18px;line-height:18px;text-align:right;">1.560.000.000</div>
<div class="abs" style="left:1804px;top:218px;width:26px;height:26px;border-radius:13px;background:#fff"></div>
<div class="abs" style="left:1836px;top:218px;width:26px;height:26px;border-radius:13px;background:#fff"></div>
<div class="abs" style="left:1868px;top:218px;width:26px;height:26px;border-radius:13px;background:#fff"></div>
<svg class="abs" style="left:1809px;top:223px" width="17" height="16" viewBox="0 0 17 16" fill="none" stroke="#3b5be8" stroke-width="1.400" stroke-linejoin="round" stroke-linecap="round"><path d="M2.700 8.700 V11.700 a2 2 0 0 0 2 2 H12.300 a2 2 0 0 0 2 -2 V9"/><path d="M5.200 10.900 L5.900 8.300 L11.800 2.400 L13.900 4.500 L8 10.400Z"/></svg>
<svg class="abs" style="left:1841px;top:221px" width="18" height="21" viewBox="0 0 18 21" fill="none" stroke="#444" stroke-width="1.200" stroke-linejoin="round"><rect x="1.200" y="1.200" width="12.800" height="14.800" rx="2.800"/><rect x="4.400" y="4.400" width="12.400" height="15.200" rx="2.800" fill="#fff"/><path d="M8.300 9.200 H10.800 M8.300 12.200 H13 M8.300 15.100 H13" stroke-width="1.100"/></svg>
<svg class="abs" style="left:1879px;top:224px" width="4" height="15" viewBox="0 0 4 15" fill="#333"><circle cx="2" cy="2.300" r="1.100"/><circle cx="2" cy="7.300" r="1.100"/><circle cx="2" cy="12.300" r="1.100"/></svg>
<div class="cell hc" style="left:1335px;top:550px;width:100px;height:18px;line-height:18px;text-align:right;">1</div>
<div class="cell hc" id="s_ng" style="left:1455px;top:550px;width:140px;height:18px;line-height:18px;text-align:right;">7.650.000.000</div>
<div class="cell hc" id="s_hm" style="left:1615px;top:550px;width:180px;height:18px;line-height:18px;text-align:right;">1.560.000.000</div>
<div class="abs" style="left:288px;top:576px;width:1617px;height:7px;background:#f1f1f1"></div>
<div class="abs" style="left:288px;top:576px;width:916px;height:6.500px;background:#d0d0d1;border-radius:4px"></div>
<div class="abs" style="left:288px;top:583px;width:1617px;height:38px;background:linear-gradient(90deg,#fff,#f7f8fb)"></div>
<div class="cell " id="ft_total" style="left:298px;top:594px;width:200px;height:18px;line-height:18px;text-align:left;">Tổng số: <b>1</b> bản ghi</div>
<div class="cell " id="ft_rows" style="left:1637px;top:594px;width:90px;height:18px;line-height:18px;text-align:left;">Số dòng/trang</div>
<div class="cell " id="ft_100" style="left:1731px;top:594px;width:30px;height:18px;line-height:18px;text-align:left;">100</div>
<svg class="abs" style="left:1758px;top:599px" width="11" height="7" viewBox="0 0 11 7"><path d="M1.300 1.200 L5.500 5.400 L9.700 1.200" stroke="#111" stroke-width="2" fill="none"/></svg>
<div class="cell " style="left:1801px;top:594px;width:12px;height:18px;line-height:18px;text-align:left;color:#777;font-size:11px">&lt;</div>
<div class="cell " id="ft_trang" style="left:1818px;top:594px;width:40px;height:18px;line-height:18px;text-align:left;">Trang</div>
<div class="cell hc" style="left:1865px;top:594px;width:12px;height:18px;line-height:18px;text-align:center;">1</div>
<div class="cell " style="left:1887px;top:594px;width:12px;height:18px;line-height:18px;text-align:left;color:#777;font-size:11px">&gt;</div>
<div class="abs" style="left:668.500px;top:142.500px;width:260.300px;height:68px;border:3px solid #e8383d;box-shadow:1px 2px 5px rgba(0,0,0,.35)"></div>
<!--GRID_END-->
<!--DETAIL_START-->
<div class="abs" style="left:288px;top:620px;width:1617px;height:3px;background:#f0f0f0;border-top:1px solid #9a9b9e;border-bottom:1px solid #b5b6b9"></div>
<div class="cell " id="dt1" style="left:304px;top:630px;width:120px;height:18px;line-height:18px;text-align:left;color:#2b4fe8">Lịch sử biến động</div>
<div class="cell " id="dt2" style="left:440px;top:630px;width:120px;height:18px;line-height:18px;text-align:left;">Thông tin kê khai</div>
<div class="cell " id="dt3" style="left:570px;top:630px;width:120px;height:18px;line-height:18px;text-align:left;">Tệp đính kèm</div>
<div class="abs" style="left:304px;top:653.500px;width:104px;height:2.500px;background:#2b4fe8"></div>
<div class="abs" style="left:1879px;top:632px;width:16px;height:16px;border-radius:8px;background:#dde1f3"></div>
<svg class="abs" style="left:1883px;top:638px" width="8" height="5" viewBox="0 0 8 5"><path d="M1 .8 L4 3.800 L7 .8" stroke="#2b4fe8" stroke-width="1.400" fill="none"/></svg>
<div class="abs" style="left:288px;top:657px;width:1617px;height:35px;background:#f5f5f5"></div>
<div class="hl" style="left:288px;top:692px;width:1617px"></div>
<div class="hl" style="left:288px;top:728px;width:1617px"></div>
<div class="hl" style="left:288px;top:763px;width:1617px"></div>
<div class="hl" style="left:288px;top:797px;width:1617px"></div>
<div class="vl" style="left:347px;top:657px;height:141px"></div>
<div class="vl" style="left:467px;top:657px;height:141px"></div>
<div class="vl" style="left:617px;top:657px;height:141px"></div>
<div class="vl" style="left:767px;top:657px;height:141px"></div>
<div class="vl" style="left:1062px;top:657px;height:141px"></div>
<div class="vl" style="left:1212px;top:657px;height:141px"></div>
<div class="vl" style="left:1362px;top:657px;height:141px"></div>
<div class="vl" style="left:1512px;top:657px;height:141px"></div>
<div class="vl" style="left:1662px;top:657px;height:141px"></div>
<div class="vl" style="left:1812px;top:657px;height:141px"></div>
<div class="vl" style="left:1815px;top:657px;height:141px"></div>
<div class="cell hc" style="left:288px;top:666px;width:59px;height:18px;line-height:18px;text-align:center;">STT</div>
<div class="cell hc" id="dh_so" style="left:358px;top:666px;width:105px;height:18px;line-height:18px;text-align:left;">Số chứng từ</div>
<div class="cell hc" id="dh_nct" style="left:467px;top:666px;width:150px;height:18px;line-height:18px;text-align:center;">Ngày chứng từ</div>
<div class="cell hc" id="dh_nbd" style="left:617px;top:666px;width:150px;height:18px;line-height:18px;text-align:center;">Ngày biến động</div>
<div class="cell hc" id="dh_nd" style="left:778px;top:666px;width:200px;height:18px;line-height:18px;text-align:left;">Nội dung</div>
<div class="cell hc" id="dh_ng" style="left:1072px;top:666px;width:130px;height:18px;line-height:18px;text-align:right;">Nguyên giá</div>
<div class="cell hc" id="dh_st" style="left:1222px;top:666px;width:130px;height:18px;line-height:18px;text-align:right;">Số tiền thực hiện</div>
<div class="cell hc" id="dh_gt" style="left:1372px;top:666px;width:130px;height:18px;line-height:18px;text-align:right;">Giá trị HM/KH</div>
<div class="cell hc" id="dh_hm" style="left:1522px;top:666px;width:130px;height:18px;line-height:18px;text-align:right;">HM/KH lũy kế</div>
<div class="cell hc" id="dh_cl" style="left:1672px;top:666px;width:130px;height:18px;line-height:18px;text-align:right;">Giá trị còn lại</div>
<div class="cell hc" id="dh_cn" style="left:1816px;top:666px;width:88px;height:18px;line-height:18px;text-align:center;">Chức năng</div>
<div class="cell " style="left:288px;top:702px;width:59px;height:18px;line-height:18px;text-align:center;">1</div>
<div class="cell " id="r0_so" style="left:358px;top:702px;width:108px;height:18px;line-height:18px;text-align:left;color:#2a5fd0">DGL030</div>
<div class="cell " id="r0_d1" style="left:467px;top:702px;width:150px;height:18px;line-height:18px;text-align:center;">13/10/2025</div>
<div class="cell " id="r0_d2" style="left:617px;top:702px;width:150px;height:18px;line-height:18px;text-align:center;">13/10/2025</div>
<div class="cell " id="r0_nd" style="left:778px;top:702px;width:250px;height:18px;line-height:18px;text-align:left;">Đánh giá lại</div>
<div class="cell " id="r0_ng" style="left:1072px;top:702px;width:130px;height:18px;line-height:18px;text-align:right;">7.650.000.000</div>
<div class="cell " style="left:1222px;top:702px;width:130px;height:18px;line-height:18px;text-align:right;">0</div>
<div class="cell " style="left:1372px;top:702px;width:130px;height:18px;line-height:18px;text-align:right;">0</div>
<div class="cell " id="r0_hm" style="left:1522px;top:702px;width:130px;height:18px;line-height:18px;text-align:right;">1.560.000.000</div>
<div class="cell " id="r0_cl" style="left:1672px;top:702px;width:130px;height:18px;line-height:18px;text-align:right;">6.090.000.000</div>
<svg class="abs" style="left:1851px;top:703px" width="14" height="15" viewBox="0 0 16 17" fill="none" stroke="#e0492f" stroke-width="1.450" stroke-linecap="round" stroke-linejoin="round"><path d="M1.200 4.200 H14.800"/><path d="M5.300 4 V2.500 a1.300 1.300 0 0 1 1.300 -1.300 H9.400 a1.300 1.300 0 0 1 1.300 1.300 V4"/><path d="M2.800 4.500 L3.600 14 a1.800 1.800 0 0 0 1.800 1.700 H10.600 a1.800 1.800 0 0 0 1.800 -1.700 L13.200 4.500"/><path d="M6.300 7.500 V12.500 M9.700 7.500 V12.500"/></svg>
<div class="cell " style="left:288px;top:738px;width:59px;height:18px;line-height:18px;text-align:center;">2</div>
<div class="cell " id="r1_d1" style="left:467px;top:738px;width:150px;height:18px;line-height:18px;text-align:center;">13/10/2025</div>
<div class="cell " id="r1_d2" style="left:617px;top:738px;width:150px;height:18px;line-height:18px;text-align:center;">13/10/2025</div>
<div class="cell " id="r1_nd" style="left:778px;top:738px;width:250px;height:18px;line-height:18px;text-align:left;">Thay đổi thông tin</div>
<div class="cell " id="r1_ng" style="left:1072px;top:738px;width:130px;height:18px;line-height:18px;text-align:right;">5.650.000.000</div>
<div class="cell " style="left:1222px;top:738px;width:130px;height:18px;line-height:18px;text-align:right;">0</div>
<div class="cell " style="left:1372px;top:738px;width:130px;height:18px;line-height:18px;text-align:right;">0</div>
<div class="cell " id="r1_hm" style="left:1522px;top:738px;width:130px;height:18px;line-height:18px;text-align:right;">1.560.000.000</div>
<div class="cell " id="r1_cl" style="left:1672px;top:738px;width:130px;height:18px;line-height:18px;text-align:right;">4.090.000.000</div>
<svg class="abs" style="left:1851px;top:739px" width="14" height="15" viewBox="0 0 16 17" fill="none" stroke="#e0492f" stroke-width="1.450" stroke-linecap="round" stroke-linejoin="round"><path d="M1.200 4.200 H14.800"/><path d="M5.300 4 V2.500 a1.300 1.300 0 0 1 1.300 -1.300 H9.400 a1.300 1.300 0 0 1 1.300 1.300 V4"/><path d="M2.800 4.500 L3.600 14 a1.800 1.800 0 0 0 1.800 1.700 H10.600 a1.800 1.800 0 0 0 1.800 -1.700 L13.200 4.500"/><path d="M6.300 7.500 V12.500 M9.700 7.500 V12.500"/></svg>
<div class="cell " style="left:288px;top:773px;width:59px;height:18px;line-height:18px;text-align:center;">3</div>
<div class="cell " id="r2_so" style="left:358px;top:773px;width:108px;height:18px;line-height:18px;text-align:left;color:#2a5fd0">GT000198&amp;apos</div>
<div class="cell " id="r2_d1" style="left:467px;top:773px;width:150px;height:18px;line-height:18px;text-align:center;">01/02/2025</div>
<div class="cell " id="r2_d2" style="left:617px;top:773px;width:150px;height:18px;line-height:18px;text-align:center;">01/02/2025</div>
<div class="cell " id="r2_nd" style="left:778px;top:773px;width:250px;height:18px;line-height:18px;text-align:left;">Ghi tăng</div>
<div class="cell " id="r2_ng" style="left:1072px;top:773px;width:130px;height:18px;line-height:18px;text-align:right;">5.650.000.000</div>
<div class="cell " style="left:1222px;top:773px;width:130px;height:18px;line-height:18px;text-align:right;">0</div>
<div class="cell " style="left:1372px;top:773px;width:130px;height:18px;line-height:18px;text-align:right;">0</div>
<div class="cell " id="r2_hm" style="left:1522px;top:773px;width:130px;height:18px;line-height:18px;text-align:right;">1.560.000.000</div>
<div class="cell " id="r2_cl" style="left:1672px;top:773px;width:130px;height:18px;line-height:18px;text-align:right;">4.090.000.000</div>
<svg class="abs" style="left:1851px;top:774px" width="14" height="15" viewBox="0 0 16 17" fill="none" stroke="#e0492f" stroke-width="1.450" stroke-linecap="round" stroke-linejoin="round"><path d="M1.200 4.200 H14.800"/><path d="M5.300 4 V2.500 a1.300 1.300 0 0 1 1.300 -1.300 H9.400 a1.300 1.300 0 0 1 1.300 1.300 V4"/><path d="M2.800 4.500 L3.600 14 a1.800 1.800 0 0 0 1.800 1.700 H10.600 a1.800 1.800 0 0 0 1.800 -1.700 L13.200 4.500"/><path d="M6.300 7.500 V12.500 M9.700 7.500 V12.500"/></svg>
<!--DETAIL_END-->
<!-- right edge tab -->
<div class="abs" style="left:1903.700px;top:329.600px;width:20px;height:90.400px;border-radius:6px;background:#2b4fe8;box-shadow:-2px 1px 4px rgba(0,0,0,.22)"></div>
<svg class="abs" style="left:1909.700px;top:370px" width="6" height="9" viewBox="0 0 6 9"><path d="M4.800 .8 L1.200 4.500 L4.800 8.200" stroke="#fff" stroke-width="1.400" fill="none"/></svg>
<!-- dark shadow bottom right -->
<div class="abs" style="left:1912px;top:738px;width:24px;height:156px;background:rgba(72,74,80,.6);filter:blur(4px);border-radius:10px"></div>
<!-- chat fab -->
<div class="abs" style="left:1854px;top:847px;width:48px;height:48px;border-radius:24px;background:linear-gradient(180deg,#12cb7c 0%,#15b877 55%,#18a274 100%)"></div>
<svg class="abs" style="left:1854px;top:847px" width="48" height="48" viewBox="0 0 48 48"><path d="M9.300 24 Q12 12.500 24 10.800 Q36 12.500 38.700 24 Q36 35.500 24 37.200 Q12 35.500 9.300 24Z" fill="#fff"/><circle cx="24" cy="23.600" r="8.400" fill="#16b877"/><path d="M28 30 L33 32.300 L31.500 27Z" fill="#16b877"/><circle cx="21.200" cy="24" r="1.700" fill="#fff"/><circle cx="27" cy="24" r="1.700" fill="#fff"/></svg>
</body>
</html>
